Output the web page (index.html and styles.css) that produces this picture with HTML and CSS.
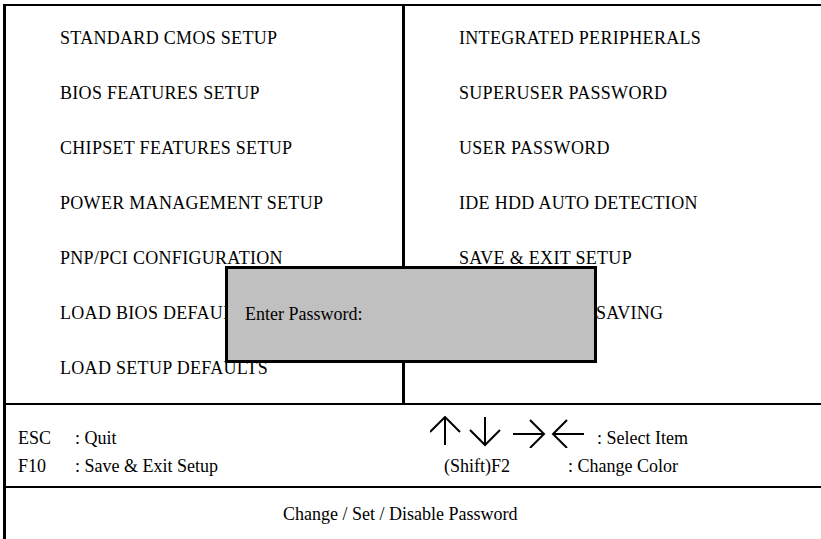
FILE: index.html
```html
<!DOCTYPE html>
<html lang="en">
<head>
    <meta charset="UTF-8">
    <meta name="viewport" content="width=device-width, initial-scale=1.0">
    <title>CMOS Setup Utility</title>
    <link rel="stylesheet" href="styles.css">
</head>
<body>
    <div class="frame">
        <main class="menu">
            <ul class="column left">
                <li>STANDARD CMOS SETUP</li>
                <li>BIOS FEATURES SETUP</li>
                <li>CHIPSET FEATURES SETUP</li>
                <li>POWER MANAGEMENT SETUP</li>
                <li>PNP/PCI CONFIGURATION</li>
                <li>LOAD BIOS DEFAULTS</li>
                <li>LOAD SETUP DEFAULTS</li>
            </ul>
            <ul class="column right">
                <li>INTEGRATED PERIPHERALS</li>
                <li>SUPERUSER PASSWORD</li>
                <li>USER PASSWORD</li>
                <li>IDE HDD AUTO DETECTION</li>
                <li>SAVE &amp; EXIT SETUP</li>
                <li>EXIT WITHOUT SAVING</li>
            </ul>
            <div class="dialog">Enter Password:</div>
        </main>
        <section class="keys">
            <div class="row">
                <span class="key">ESC</span>
                <span class="desc">: Quit</span>
                <svg class="arrows" width="160" height="32" viewBox="0 0 160 32" fill="none" stroke="#000" stroke-width="2">
                    <path d="M15 1V29M0 16L15 1L30 16"/>
                    <path d="M55 1V29M40 14L55 29L70 14"/>
                    <path d="M83 18H114M100 4L114 18L100 32"/>
                    <path d="M123 18H154M137 4L123 18L137 32"/>
                </svg>
                <span>: Select Item</span>
            </div>
            <div class="row">
                <span class="key">F10</span>
                <span class="desc">: Save &amp; Exit Setup</span>
                <span class="shift">(Shift)F2</span>
                <span>: Change Color</span>
            </div>
        </section>
        <footer class="status">Change / Set / Disable Password</footer>
    </div>
</body>
</html>
```

FILE: styles.css
```css
/* Award BIOS style setup screen */
body {
    margin: 0;
    padding: 0;
    background: #fff;
    color: #000;
    font-family: "Liberation Serif", "Times New Roman", serif;
    font-size: 18px;
    overflow: hidden;
}
.frame {
    width: 840px;
    margin: 4px 0 0 3px;
    border-top: 2px solid #000;
    border-left: 3px solid #000;
}
.menu {
    position: relative;
    display: grid;
    grid-template-columns: 399px 1fr;
    height: 397px;
}
.column {
    list-style: none;
    margin: 0;
    padding: 5px 0 0 54px;
}
.column li {
    line-height: 55px;
    letter-spacing: 0.3px;
    white-space: nowrap;
}
.column.left {
    border-right: 3px solid #000;
}
.dialog {
    position: absolute;
    left: 219px;
    top: 260px;
    width: 372px;
    height: 97px;
    box-sizing: border-box;
    border: 3px solid #000;
    background: #c0c0c0;
    display: flex;
    align-items: center;
    padding-left: 17px;
}
.keys {
    border-top: 2px solid #000;
    border-bottom: 2px solid #000;
    padding: 19px 0 6px 12px;
}
.row {
    display: flex;
    align-items: center;
    height: 28px;
    white-space: nowrap;
}
.key {
    width: 57px;
}
.desc {
    width: 355px;
}
.arrows {
    align-self: flex-start;
    margin: -8px 7px 0 0;
}
.shift {
    margin-left: 14px;
    width: 124px;
}
.status {
    padding: 12px 0 20px 277px;
    line-height: 28px;
}
```
